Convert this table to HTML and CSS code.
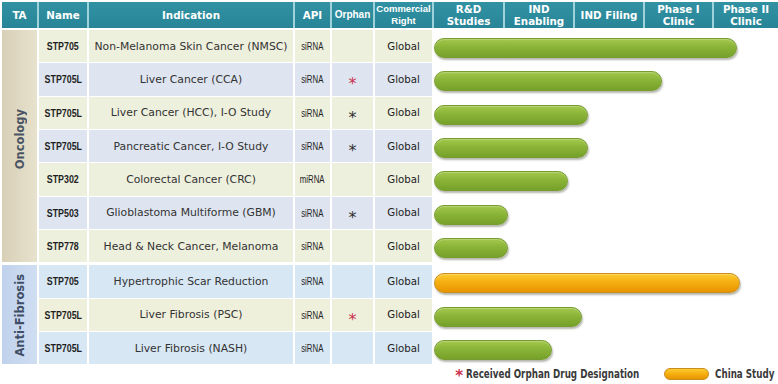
FILE: index.html
```html
<!DOCTYPE html>
<html lang="en">
<head>
<meta charset="utf-8">
<title>Pipeline</title>
<link rel="stylesheet" href="styles.css">
</head>
<body>
<div class="chart">
  <div class="head">
    <div class="h">TA</div>
    <div class="h">Name</div>
    <div class="h">Indication</div>
    <div class="h">API</div>
    <div class="h h-arial">Orphan</div>
    <div class="h h-arial h-small">Commercial<br>Right</div>
    <div class="h">R&amp;D<br>Studies</div>
    <div class="h">IND<br>Enabling</div>
    <div class="h">IND Filing</div>
    <div class="h">Phase I<br>Clinic</div>
    <div class="h">Phase II<br>Clinic</div>
  </div>

  <section class="group onc">
    <div class="ta"><span>Oncology</span></div>
    <div class="rows">
      <div class="row cream">
        <div class="c name"><b>STP705</b></div>
        <div class="c ind">Non-Melanoma Skin Cancer (NMSC)</div>
        <div class="c api"><span>siRNA</span></div>
        <div class="c orph"></div>
        <div class="c right">Global</div>
        <div class="stages"><i></i><i></i><i></i><i></i><i></i><div class="bar" style="width:303px"></div></div>
      </div>
      <div class="row blue">
        <div class="c name"><b>STP705L</b></div>
        <div class="c ind">Liver Cancer (CCA)</div>
        <div class="c api"><span>siRNA</span></div>
        <div class="c orph"><span class="star red">*</span></div>
        <div class="c right">Global</div>
        <div class="stages"><i></i><i></i><i></i><i></i><i></i><div class="bar" style="width:228px"></div></div>
      </div>
      <div class="row cream">
        <div class="c name"><b>STP705L</b></div>
        <div class="c ind">Liver Cancer (HCC), I-O Study</div>
        <div class="c api"><span>siRNA</span></div>
        <div class="c orph"><span class="star">*</span></div>
        <div class="c right">Global</div>
        <div class="stages"><i></i><i></i><i></i><i></i><i></i><div class="bar" style="width:154px"></div></div>
      </div>
      <div class="row blue">
        <div class="c name"><b>STP705L</b></div>
        <div class="c ind">Pancreatic Cancer, I-O Study</div>
        <div class="c api"><span>siRNA</span></div>
        <div class="c orph"><span class="star">*</span></div>
        <div class="c right">Global</div>
        <div class="stages"><i></i><i></i><i></i><i></i><i></i><div class="bar" style="width:154px"></div></div>
      </div>
      <div class="row cream">
        <div class="c name"><b>STP302</b></div>
        <div class="c ind">Colorectal Cancer (CRC)</div>
        <div class="c api"><span>miRNA</span></div>
        <div class="c orph"></div>
        <div class="c right">Global</div>
        <div class="stages"><i></i><i></i><i></i><i></i><i></i><div class="bar" style="width:134px"></div></div>
      </div>
      <div class="row blue">
        <div class="c name"><b>STP503</b></div>
        <div class="c ind">Glioblastoma Multiforme (GBM)</div>
        <div class="c api"><span>siRNA</span></div>
        <div class="c orph"><span class="star">*</span></div>
        <div class="c right">Global</div>
        <div class="stages"><i></i><i></i><i></i><i></i><i></i><div class="bar" style="width:74px"></div></div>
      </div>
      <div class="row cream">
        <div class="c name"><b>STP778</b></div>
        <div class="c ind">Head &amp; Neck Cancer, Melanoma</div>
        <div class="c api"><span>siRNA</span></div>
        <div class="c orph"></div>
        <div class="c right">Global</div>
        <div class="stages"><i></i><i></i><i></i><i></i><i></i><div class="bar" style="width:74px"></div></div>
      </div>
    </div>
  </section>

  <section class="group fib">
    <div class="ta"><span>Anti-Fibrosis</span></div>
    <div class="rows">
      <div class="row fblue">
        <div class="c name"><b>STP705</b></div>
        <div class="c ind">Hypertrophic Scar Reduction</div>
        <div class="c api"><span>siRNA</span></div>
        <div class="c orph"></div>
        <div class="c right">Global</div>
        <div class="stages"><i></i><i></i><i></i><i></i><i></i><div class="bar orange" style="width:306px"></div></div>
      </div>
      <div class="row fcream">
        <div class="c name"><b>STP705L</b></div>
        <div class="c ind">Liver Fibrosis (PSC)</div>
        <div class="c api"><span>siRNA</span></div>
        <div class="c orph"><span class="star red">*</span></div>
        <div class="c right">Global</div>
        <div class="stages"><i></i><i></i><i></i><i></i><i></i><div class="bar" style="width:148px"></div></div>
      </div>
      <div class="row fblue">
        <div class="c name"><b>STP705L</b></div>
        <div class="c ind">Liver Fibrosis (NASH)</div>
        <div class="c api"><span>siRNA</span></div>
        <div class="c orph"></div>
        <div class="c right">Global</div>
        <div class="stages"><i></i><i></i><i></i><i></i><i></i><div class="bar" style="width:118px"></div></div>
      </div>
    </div>
  </section>

  <footer class="legend">
    <span class="legend-star">*</span>
    <span class="legend-note"><span>Received Orphan Drug Designation</span></span>
    <span class="pill"></span>
    <span class="legend-china"><span>China Study</span></span>
  </footer>
</div>
</body>
</html>
```

FILE: styles.css
```css
* { box-sizing: border-box; }
html, body { margin: 0; padding: 0; background: #fff; }
body { width: 778px; height: 384px; overflow: hidden; font-family: "DejaVu Sans", Verdana, sans-serif; }

.chart { padding: 2px 0 0 2px; }

/* header */
.head {
  display: grid;
  grid-template-columns: 35px 48px 204px 35px 41px 57px 69px 68px 68px 67px 64px;
  column-gap: 2px;
  height: 26px;
  background: #9fd2db;
}
.h {
  display: flex;
  align-items: center;
  justify-content: center;
  text-align: center;
  background: linear-gradient(#3192a3, #288598);
  color: #fff;
  font-weight: bold;
  font-size: 10.3px;
  line-height: 12px;
  white-space: nowrap;
}
.h-arial { font-family: "Liberation Sans", Arial, sans-serif; font-size: 10px; }
.h-small { font-size: 9.5px; line-height: 12px; }

/* groups */
.group { display: flex; margin-top: 2px; }
.group.fib { margin-top: 3px; }
.ta {
  width: 35px;
  flex: none;
  display: flex;
  align-items: center;
  justify-content: center;
  margin-right: 2px;
  color: #4a5464;
  font-weight: bold;
  font-size: 11.5px;
}
.onc .ta { background: linear-gradient(to right, #d8cfb7, #e7e2cd); padding-bottom: 14px; }
.fib .ta { background: linear-gradient(to right, #c0d2ec, #d0def1); color: #3f4e66; }
.ta span { writing-mode: vertical-rl; transform: rotate(180deg); white-space: nowrap; }

.rows { display: flex; flex-direction: column; gap: 1px; }
.row {
  display: grid;
  grid-template-columns: 48px 204px 35px 41px 57px 344px;
  column-gap: 2px;
  height: 32.33px;
}
.c {
  display: flex;
  align-items: center;
  justify-content: center;
  white-space: nowrap;
  color: #2a2a2a;
}
.cream .c, .cream .stages i { background: #eef0de; }
.blue .c, .blue .stages i { background: #dee5f0; }
.fblue .c, .fblue .stages i { background: #d7e7f3; }
.fcream .c, .fcream .stages i { background: #eff0dc; }

.name b {
  display: inline-block;
  font-family: "Liberation Sans", Arial, sans-serif;
  font-size: 11.5px;
  transform: scaleX(0.77);
  color: #1f1f1f;
}
.ind { font-size: 10.8px; color: #333; }
.api span {
  display: inline-block;
  font-family: "Liberation Sans", Arial, sans-serif;
  font-size: 11.5px;
  transform: scaleX(0.68);
  color: #1f1f1f;
}
.orph { padding-top: 10px; }
.star { font-size: 16px; color: #333; line-height: 1; }
.star.red { color: #c9344f; }
.right { font-size: 10.2px; color: #222; }

/* stages + bars */
.stages {
  display: grid;
  grid-template-columns: 69px 68px 68px 67px 64px;
  column-gap: 2px;
}
.stages i { grid-row: 1; }
.bar {
  grid-row: 1;
  grid-column: 1 / -1;
  justify-self: start;
  align-self: center;
  height: 20px;
  margin-top: 4px;
  border-radius: 10px;
  background: linear-gradient(#a2c84c, #8ab437 45%, #76a12a);
  border: 1px solid #789c30;
  box-shadow: 1px 2px 2px rgba(40, 50, 20, 0.35), inset 0 1px 1px rgba(255, 255, 255, 0.25);
}
.bar.orange {
  background: linear-gradient(#fccb32, #f5ae0f 45%, #e89500);
  border-color: #c98d1e;
}

/* legend */
.legend {
  display: flex;
  justify-content: flex-end;
  align-items: center;
  height: 20px;
  padding-right: 5px;
  font-weight: bold;
  font-size: 11.5px;
  color: #3a3a3a;
}
.legend-star { color: #c9344f; font-size: 15px; margin-right: 3px; padding-top: 4px; }
.legend-note, .legend-china { white-space: nowrap; overflow: visible; }
.legend-note { width: 174px; }
.legend-china { width: 58px; margin-left: 6px; }
.legend-note span, .legend-china span {
  display: inline-block;
  transform: scaleX(0.76);
  transform-origin: left center;
}
.pill {
  width: 45px;
  height: 12px;
  margin-left: 24px;
  border-radius: 6px;
  background: linear-gradient(#fccb32, #f5ae0f 50%, #e89500);
  border: 1px solid #c98d1e;
}
```
